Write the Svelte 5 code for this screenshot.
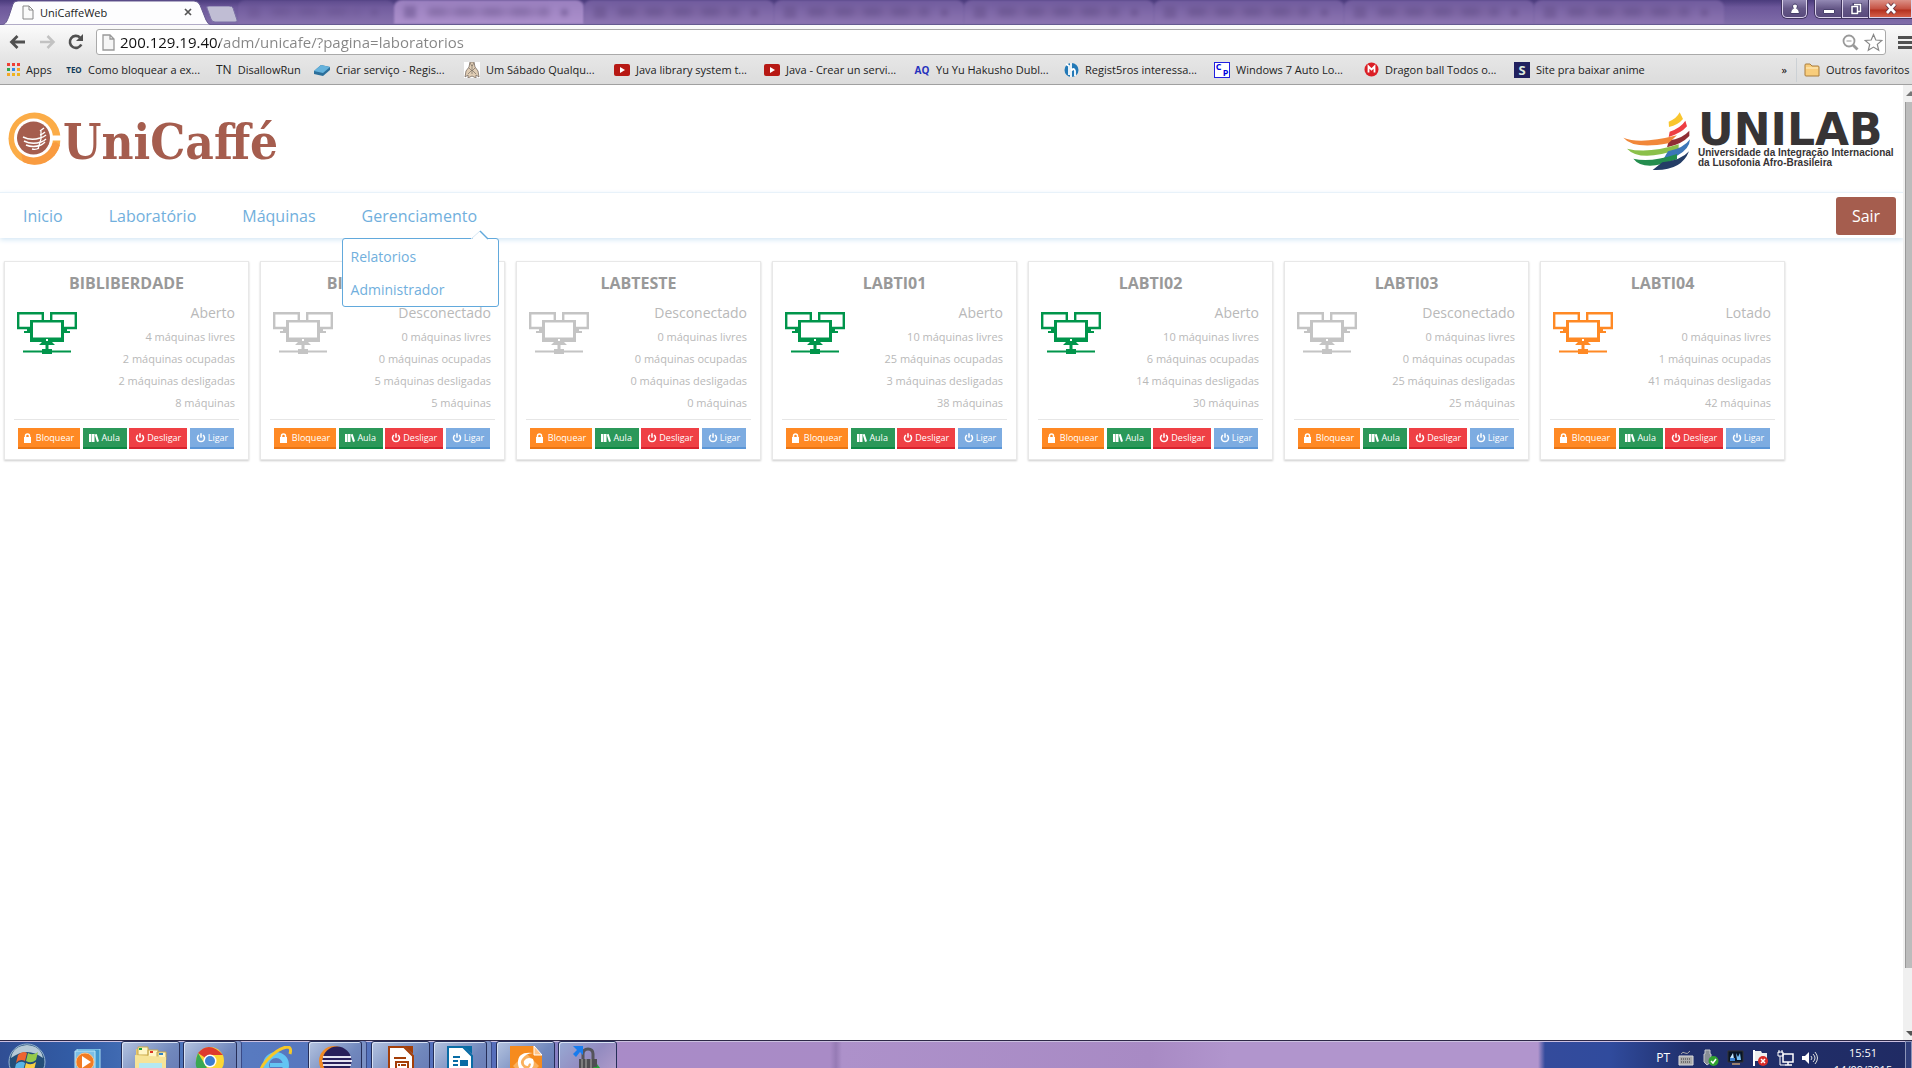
<script>
  const bookmarks = [
    { icon: 'teo', label: 'Como bloquear a ex...' },
    { icon: 'tn', label: 'DisallowRun', short: true },
    { icon: 'box', label: 'Criar serviço - Regis...' },
    { icon: 'figure', label: 'Um Sábado Qualqu...' },
    { icon: 'video', label: 'Java library system t...' },
    { icon: 'video', label: 'Java - Crear un servi...' },
    { icon: 'aq', label: 'Yu Yu Hakusho Dubl...' },
    { icon: 'globe', label: 'Regist5ros interessa...' },
    { icon: 'cp', label: 'Windows 7 Auto Lo...' },
    { icon: 'mega', label: 'Dragon ball Todos o...' },
    { icon: 'site', label: 'Site pra baixar anime' }
  ];
  const labs = [
    { name: 'BIBLIBERDADE', status: 'Aberto', tone: 'open', free: 4, busy: 2, off: 2, total: 8 },
    { name: 'BIBPALMARES', status: 'Desconectado', tone: 'offline', free: 0, busy: 0, off: 5, total: 5 },
    { name: 'LABTESTE', status: 'Desconectado', tone: 'offline', free: 0, busy: 0, off: 0, total: 0 },
    { name: 'LABTI01', status: 'Aberto', tone: 'open', free: 10, busy: 25, off: 3, total: 38 },
    { name: 'LABTI02', status: 'Aberto', tone: 'open', free: 10, busy: 6, off: 14, total: 30 },
    { name: 'LABTI03', status: 'Desconectado', tone: 'offline', free: 0, busy: 0, off: 25, total: 25 },
    { name: 'LABTI04', status: 'Lotado', tone: 'full', free: 0, busy: 1, off: 41, total: 42 }
  ];
  const backgroundTabs = ['dim', 'bright', 'mid', 'mid', 'mid', 'mid', 'mid', 'mid'];
  let address = $state('200.129.19.40/adm/unicafe/?pagina=laboratorios');
</script>

{#snippet power()}
  <svg width="10" height="10" viewBox="0 0 10 10" fill="none" stroke="#fff" stroke-width="1.5"><path d="M3 2.200a3.500 3.500 0 1 0 4 0M5 .300v4.500" /></svg>
{/snippet}

<div class="window">
  <div class="tabstrip">
    <div class="tab">
      <svg class="shape" viewBox="0 0 212 25" preserveAspectRatio="none"><path d="M0 25C6 25 7 21 9 16L13 4Q14 1 18 1H194Q198 1 200 5L206 20Q208 25 212 25Z" fill="#fdfdfe" stroke="#665a90" /></svg>
      <svg width="12" height="15" viewBox="0 0 12 15"><path d="M1 1h6l4 4v9H1zM7 1v4h4" fill="#fafafa" stroke="#888" /></svg>
      <span>UniCaffeWeb</span>
      <button class="plain" aria-label="Fechar guia"><svg width="8" height="8" viewBox="0 0 8 8"><path d="M1 1l6 6M7 1L1 7" stroke="#555" stroke-width="1.7" /></svg></button>
    </div>
    <button class="newtab" aria-label="Nova guia"><svg width="32" height="17" viewBox="0 0 32 17"><path d="M1 2Q0 0 3 0H23Q26 0 27 2L31 14Q32 16 29 16H9Q6 16 5 13Z" fill="#c0bdd4" stroke="#7b71a5" /></svg></button>
    <div class="glass">
      {#each backgroundTabs as tone}
        <div class="ghost {tone}"><i></i><b></b><u></u></div>
      {/each}
    </div>
    <div class="controls">
      <button class="user" aria-label="Usuário"><svg width="12" height="12" viewBox="0 0 12 12"><path d="M6 1a2.4 2.4 0 0 1 1.5 4.3Q10.5 6 10.5 10.5h-9Q1.500 6 4.500 5.300A2.400 2.400 0 0 1 6 1z" fill="#fff" stroke="#443d68" /></svg></button>
      <div class="group">
        <button aria-label="Minimizar"><svg width="14" height="12" viewBox="0 0 14 12"><path d="M1.500 6.500h11v4h-11z" fill="#fff" stroke="#4a426e" /></svg></button>
        <button aria-label="Restaurar"><svg width="14" height="14" viewBox="0 0 14 14" fill="none"><path d="M5 2.500h6.500v7H5zM3 4.500h5.500v7H3z" stroke="#4a426e" stroke-width="3" /><path d="M5 2.500h6.500v7H9M3 4.500h5.500v7H3z" stroke="#fff" stroke-width="1.500" /></svg></button>
        <button class="close" aria-label="Fechar"><svg width="14" height="13" viewBox="0 0 14 13"><path d="M3 2l8 9M11 2l-8 9" stroke="#653442" stroke-width="4.500" /><path d="M3 2l8 9M11 2l-8 9" stroke="#fff" stroke-width="2.700" /></svg></button>
      </div>
    </div>
  </div>

  <div class="toolbar">
    <button class="plain" aria-label="Voltar"><svg width="18" height="16" viewBox="0 0 18 16" fill="none" stroke="#505050" stroke-width="2.800"><path d="M2 8h14M8.500 2l-6 6 6 6" /></svg></button>
    <button class="plain" aria-label="Avançar"><svg width="18" height="16" viewBox="0 0 18 16" fill="none" stroke="#c2c2c2" stroke-width="2.500"><path d="M2 8h14M9.500 2l6 6-6 6" /></svg></button>
    <button class="plain" aria-label="Recarregar"><svg width="18" height="18" viewBox="0 0 18 18"><path d="M14.300 11.500A6 6 0 1 1 13 4.500" fill="none" stroke="#505050" stroke-width="2.600" /><path d="M16 1v7H9z" fill="#505050" /></svg></button>
    <div class="addressbox">
      <svg width="13" height="17" viewBox="0 0 13 17"><path d="M1 1h7l4 4v11H1zM8 1v4h4" fill="#f6f6f6" stroke="#999" stroke-width="1.300" /></svg>
      <input aria-label="Endereço" bind:value={address} spellcheck="false" />
      <button class="plain" aria-label="Zoom"><svg width="17" height="17" viewBox="0 0 17 17" fill="none" stroke="#999"><circle cx="7" cy="7" r="5.500" stroke-width="1.800" /><path d="M11 11l4.500 4.500" stroke-width="2.800" /><path d="M4.500 7h5" /></svg></button>
      <button class="plain" aria-label="Favoritar"><svg width="19" height="19" viewBox="0 0 19 19"><path d="M9.500 1.500l2.300 5.500 6 .500-4.500 3.900 1.400 5.900-5.200-3.200-5.200 3.200 1.400-5.900L1.200 7.500l6-.500z" fill="#fff" stroke="#888" stroke-width="1.200" /></svg></button>
    </div>
    <button class="plain" aria-label="Menu"><svg width="15" height="15" viewBox="0 0 15 15"><path d="M1 2.500h14M1 7.500h14M1 12.500h14" stroke="#505050" stroke-width="3" /></svg></button>
  </div>

  <nav class="bookmarks" aria-label="Favoritos">
    <a class="apps" href="#apps">
      <svg width="13" height="13" viewBox="0 0 13 13"><path d="M0 0h3v3H0zM5 0h3v3H5zM10 0h3v3h-3z" fill="#ee4035" /><path d="M0 5h3v3H0z" fill="#2fa84f" /><path d="M5 5h3v3H5z" fill="#2f88e8" /><path d="M10 5h3v3h-3zM0 10h3v3H0z" fill="#f5a623" /><path d="M5 10h3v3H5zM10 10h3v3h-3z" fill="#efb321" /></svg>
      Apps
    </a>
    {#each bookmarks as mark}
      <a class="mark" class:short={mark.short} href="#favorito">
        {#if mark.icon === 'tn'}<span class="tn">TN</span>
        {:else if mark.icon === 'teo'}<span class="badge teo">TEO</span>
        {:else if mark.icon === 'aq'}<span class="badge aq">AQ</span>
        {:else if mark.icon === 'site'}<span class="badge site">S</span>
        {:else if mark.icon === 'cp'}<span class="badge cp"><span>C</span><span>P</span></span>
        {:else if mark.icon === 'box'}
          <svg width="16" height="16" viewBox="0 0 16 16"><path d="M0 9l7-6 9 2v3l-7 6-9-2z" fill="#2b6f9b" /><path d="M0 9l7-6 9 2-7 6z" fill="#65b2dc" /></svg>
        {:else if mark.icon === 'figure'}
          <svg width="16" height="16" viewBox="0 0 16 16"><path d="M0 0h16v16H0z" fill="#fff" /><path d="M6 0L5 5 2 9 1 15l3-2v3l4-2 4 2v-3l3 2-1-6-3-4-1-5z" fill="#e0cdb4" stroke="#776b62" stroke-width=".8" /><path d="M6 1l2 3 2-3M5 6l3 3 3-3M4 12l4-4 4 4M8 3v9" fill="none" stroke="#84786d" stroke-width=".8" /></svg>
        {:else if mark.icon === 'video'}
          <svg width="16" height="12" viewBox="0 0 16 12"><rect width="16" height="12" rx="2" fill="#b71914" /><path d="M6 3l5 3-5 3z" fill="#fff" /></svg>
        {:else if mark.icon === 'globe'}
          <svg width="15" height="16" viewBox="0 0 15 16"><circle cx="7.500" cy="8" r="7" fill="#2379b7" /><path d="M2 2l3 2v9M7 1v14M7 9q3-4 4 0v5" fill="none" stroke="#fff" stroke-width="1.800" /></svg>
        {:else}
          <svg width="15" height="15" viewBox="0 0 15 15"><circle cx="7.500" cy="7.500" r="7" fill="#db1f26" /><path d="M4.500 10.500v-6l3 3 3-3v6" fill="none" stroke="#fff" stroke-width="1.800" /></svg>
        {/if}
        <span>{mark.label}</span>
      </a>
    {/each}
    <button class="plain more" aria-label="Mais favoritos">»</button>
    <a class="others" href="#outros">
      <svg width="16" height="14" viewBox="0 0 16 14"><path d="M1 12V2q0-1 1-1h4l2 2h6q1 0 1 1v9H2q-1 0-1-1z" fill="#f8cd7c" stroke="#a97c3c" /><path d="M2 5h12" stroke="#fff0c8" /></svg>
      Outros favoritos
    </a>
  </nav>

  <div class="viewport">
    <div class="page">
      <header>
        <a class="brand" href="#inicio">
          <svg width="53" height="53" viewBox="0 0 53 53">
            <circle cx="26.500" cy="26.500" r="26" fill="#fbac47" />
            <path d="M48 30L52 33A26 26 0 0 1 15 50L13 41z" fill="#f99b40" />
            <circle cx="25.500" cy="26" r="19.500" fill="#fff" />
            <path d="M42 23.500h11v5H42z" fill="#fff" />
            <circle cx="25.500" cy="26" r="16.500" fill="#a55d4e" />
            <g fill="none" stroke="#fff" stroke-width="1.400"><path d="M15 25q8 4 17 1M16 29q8 4 17 1M18 33q7 3 15 0M24 37q4 1 7-1" /><path d="M32 19l4-3M32 23q3-1 5-3M32 26q4-1 6-3M33 30q3-1 5-3M33 33q2-1 4-3" /><path d="M33 19v8l-3 10" stroke-width="1.200" /></g>
          </svg>
          <span>UniCaffé</span>
        </a>
        <a class="unilab" href="#unilab">
          <svg width="68" height="59" viewBox="70 65 204 177">
            <path d="M207 94Q231 85 240 66L250 86Q235 104 208 110z" fill="#f9c62f" />
            <path d="M210 124Q244 112 257 91L262 108Q244 129 207 140z" fill="#ee3e43" />
            <path d="M208 150Q247 146 269 121V137Q246 162 202 171z" fill="#902e35" />
            <path d="M71 142Q120 163 232 135L206 159Q102 178 71 142z" fill="#f18739" />
            <path d="M82 175Q145 191 237 162V177Q121 217 82 175z" fill="#8bc04a" />
            <path d="M205 183Q252 174 271 147Q270 177 231 197L191 207z" fill="#3c76b8" />
            <path d="M101 205Q151 218 232 191V207Q132 246 101 205z" fill="#248d4e" />
            <path d="M188 216Q245 210 268 183Q245 243 159 239z" fill="#243d66" />
          </svg>
          <span class="words"><strong>UNILAB</strong><small>Universidade da Integração Internacional<br />da Lusofonia Afro-Brasileira</small></span>
        </a>
      </header>

      <nav class="main" aria-label="Principal">
        <a href="#inicio">Inicio</a>
        <a href="#laboratorio">Laboratório</a>
        <a href="#maquinas">Máquinas</a>
        <div class="has-menu">
          <a href="#gerenciamento">Gerenciamento</a>
          <div class="dropdown">
            <svg class="pointer" width="18" height="10" viewBox="0 0 18 10"><path d="M0 10l9-9 9 9z" fill="#fff" /><path d="M0 9l9-8" stroke="#d5e6f3" /><path d="M9 1l8 8" stroke="#62a9dc" stroke-width="1.500" /></svg>
            <a href="#relatorios">Relatorios</a>
            <a href="#administrador">Administrador</a>
          </div>
        </div>
        <button class="exit">Sair</button>
      </nav>

      <main>
        {#each labs as lab}
          <article>
            <h2>{lab.name}</h2>
            <div class="body">
              <svg class={lab.tone} width="60" height="42" viewBox="0 0 60 42" fill="currentColor">
                <path fill="none" stroke="currentColor" stroke-width="2.400" d="M13 16H1.200V1.200h24.600V8M47 16h11.800V1.200H34.200V8" />
                <path d="M10 17h4v4H7v-2h3zM46 17h4v2h3v2h-7zM13 8h34v22H13zM25 30h10l3 3H22zM28.500 33h3v4h-3zM25 37h10v5H25z" />
                <path d="M6 38.400h48v2.200H6z" />
                <path d="M16 10.500h28v15H16zM29 27h2v2h-2z" fill="#fff" />
              </svg>
              <div class="stats">
                <p class="status">{lab.status}</p>
                <p>{lab.free} máquinas livres</p>
                <p>{lab.busy} máquinas ocupadas</p>
                <p>{lab.off} máquinas desligadas</p>
                <p>{lab.total} máquinas</p>
              </div>
            </div>
            <div class="actions">
              <button class="lock"><svg width="7" height="10" viewBox="0 0 7 10"><path d="M0 4h7v6H0z" fill="#fff" /><path d="M1.500 5V3q0-2 2-2t2 2v2" fill="none" stroke="#fff" stroke-width="1.500" /></svg>Bloquear</button>
              <button class="class"><svg width="10" height="8" viewBox="0 0 10 8"><path d="M0 0h2.500v8H0zM3 0h2.500v8H3zM5.700 .500l2-.500L10 7.300l-2 .700z" fill="#fff" /></svg>Aula</button>
              <button class="off">{@render power()}Desligar</button>
              <button class="on">{@render power()}Ligar</button>
            </div>
          </article>
        {/each}
      </main>
    </div>
    <div class="scrollbar"><span class="up"></span><div class="thumb"></div><span class="down"></span></div>
  </div>

  <footer class="taskbar">
    <div class="launch">
      <button class="start" aria-label="Iniciar"><svg width="38" height="38" viewBox="0 0 38 38">
        <circle cx="19" cy="19" r="18" fill="#234e78" stroke="#98b7d2" /><path d="M3 15Q19 3 35 15Q33 3 19 2Q5 3 3 15" fill="#b5c9d6" />
        <path d="M10 12q5-5 9-2l-2 8q-5-3-9 2z" fill="#ee6531" /><path d="M20 10q5 3 10-1l-2 8q-5 4-10 1z" fill="#95c94a" /><path d="M8 21q5-4 9-1l-2 8q-5-3-9 1z" fill="#58b4e5" /><path d="M18 20q5 3 10-1l-2 8q-5 4-10 1z" fill="#f9cf45" />
      </svg></button>
      <button class="media" aria-label="Media Player"><svg width="27" height="32" viewBox="0 0 27 32"><path d="M3 0h23v32H3z" fill="#4298cf" stroke="#a8def2" /><path d="M1 2h20v30H1z" fill="#7cbfe6" stroke="#bee9f6" /><circle cx="11" cy="13" r="9" fill="#f17c23" stroke="#ffc284" /><path d="M8 7l9 6-9 6z" fill="#fff" /></svg></button>
    </div>
    <button class="task" aria-label="Windows Explorer"><svg width="34" height="34" viewBox="0 0 34 34"><path d="M2 3h8l2 3h15l5 5v23H2z" fill="#e7c66c" /><path d="M4 1h10v8H4zM14 4h10v9H14zM23 6h9v8h-9z" fill="#fff5c5" stroke="#c7a94d" /><path d="M5 2h3v2H5z" fill="#18a13d" /><path d="M16 5h3v2h-3z" fill="#df3427" /><path d="M25 7h4v2h-4z" fill="#2c82c5" /><path d="M1 9l31 2v23H1z" fill="#f6e398" /><path d="M5 17h23v12H5z" fill="#b4e8f2" /></svg></button>
    <button class="task stacked" aria-label="Google Chrome"><svg width="30" height="30" viewBox="0 0 30 30"><circle cx="15" cy="15" r="14" fill="#fbd735" /><path d="M15 15L3 7Q14-6 28 9H15z" fill="#dd3b2e" /><path d="M3 7l8 13 4 9Q-5 27 3 7" fill="#39a852" /><circle cx="15" cy="15" r="6.500" fill="#fff" /><circle cx="15" cy="15" r="5" fill="#3b7ed1" /></svg></button>
    <button class="task flat" aria-label="Internet Explorer"><svg width="34" height="34" viewBox="0 0 34 34"><circle cx="17" cy="19" r="10" fill="none" stroke="#63c4f3" stroke-width="6" /><path d="M11 19h18" stroke="#63c4f3" stroke-width="4" /><path d="M3 29Q-1 24 8 14 19 2 28 1q5 0 3 7" fill="none" stroke="#f6c829" stroke-width="3" /></svg></button>
    <button class="task stacked" aria-label="Eclipse"><svg width="34" height="32" viewBox="0 0 34 32"><circle cx="16" cy="15" r="15" fill="#f28a24" /><circle cx="19" cy="15" r="14.500" fill="#29205b" /><path d="M5 11h28M4 15h30M5 19h28" stroke="#e5e3f2" stroke-width="2" /></svg></button>
    <button class="task" aria-label="LibreOffice Impress"><svg width="26" height="34" viewBox="0 0 26 34"><path d="M1 1h15l9 9v24H1z" fill="#fff" stroke="#a43e08" stroke-width="2" /><path d="M16 0h9v8z" fill="#a43e08" /><path d="M6 12h12M8 16h12v10H8zM10 19h2M13 19h5M10 23h2M13 23h5" fill="none" stroke="#a43e08" stroke-width="2" /></svg></button>
    <button class="task stacked" aria-label="LibreOffice Writer"><svg width="26" height="34" viewBox="0 0 26 34"><path d="M1 1h15l9 9v24H1z" fill="#fff" stroke="#086ca5" stroke-width="2" /><path d="M16 0h9v8z" fill="#086ca5" /><path d="M6 11h7M6 15h5M6 19h5M6 23h14" stroke="#086ca5" stroke-width="2" /><path d="M13 14h8v6h-8z" fill="#086ca5" /></svg></button>
    <button class="task" aria-label="Foxit Reader"><svg width="32" height="34" viewBox="0 0 32 34"><path d="M0 0h24l8 9v25H0z" fill="#f68b1e" /><path d="M24 0v9h8z" fill="#ffc488" stroke="#fff" /><path d="M3 20L16 7l13 13-13 13z" fill="#fab15e" /><path d="M23 7Q7 5 8 18q1 9 10 7 8-4 5-12-6-3-9 2-1 5 4 5 1-4 3-2-1 6-7 4-5-4-2-9 4-6 11-6z" fill="#fff" /></svg></button>
    <button class="task pale" aria-label="Bloqueio remoto"><svg width="30" height="34" viewBox="0 0 30 34"><path d="M10 15V8q0-5 5-5t5 5v7" fill="none" stroke="#54545b" stroke-width="3" /><path d="M6 13h18v18H6z" fill="#4e4e52" /><path d="M9 13v18M13 13v18M18 13v18" stroke="#7d7d7d" stroke-width="2" /><path d="M0 0h10v9L7 6l-4 5-3-3 4-4z" fill="#187ced" /><path d="M20 21h4v-3l6 8v8z" fill="#25a438" /></svg></button>
    <div class="tray">
      <span>PT</span>
      <svg width="16" height="16" viewBox="0 0 16 16"><path d="M3 4q2-3 4-1t5-2" stroke="#aaa" fill="none" /><path d="M1 6h14v9H1z" fill="#aaa" stroke="#ddd" /><path d="M3 9h10M3 12h10" stroke="#333" stroke-dasharray="1 1" /></svg>
      <svg width="17" height="17" viewBox="0 0 17 17"><path d="M3 1h5v4h1v8l-4 3-3-3V5h1z" fill="#888e96" stroke="#c4c7cc" /><circle cx="11.500" cy="12" r="5" fill="#31a330" /><path d="M9 12l2 2 3-4" stroke="#fff" fill="none" stroke-width="1.500" /></svg>
      <svg width="17" height="17" viewBox="0 0 17 17"><path d="M1 2h15v11H1z" fill="#071425" stroke="#333" /><path d="M3 9l3-5 1 6z" fill="#c5e9ff" /><path d="M9 4l2 4 2-4 1 7h-4z" fill="#77bff2" /><path d="M3 9h5v3H3z" fill="#3c82d0" /><path d="M5 14h8v2H5z" fill="#9b806e" /></svg>
      <svg width="17" height="17" viewBox="0 0 17 17"><path d="M2 1v16" stroke="#fff" stroke-width="2" /><path d="M3 2h6l1 2h5v8H3z" fill="#eee" /><circle cx="11" cy="12" r="5" fill="#d92b28" /><path d="M9 10l4 4M13 10l-4 4" stroke="#fff" stroke-width="1.500" /></svg>
      <svg width="17" height="17" viewBox="0 0 17 17"><path d="M6 5h10v8H6zM8 16h7M11 13v3" fill="none" stroke="#fff" stroke-width="1.500" /><path d="M1 3h5v4H1zM2 1v3M5 1v3M3 7v9h5" fill="none" stroke="#fff" /></svg>
      <svg width="17" height="17" viewBox="0 0 17 17"><path d="M0 7h3l4-4v12l-4-4H0z" fill="#fff" /><path d="M9 7q2 2 0 4M11 5q4 4 0 8M13 3q5 6 0 12" fill="none" stroke="#ddd" /></svg>
    </div>
    <div class="clock"><time>15:51</time><time>14/09/2015</time></div>
    <button class="desktop" aria-label="Mostrar área de trabalho"></button>
  </footer>
</div>

<style>
  :global(body) { margin: 0; background: #fff; }
  .window { height: 100vh; overflow: hidden; display: flex; flex-direction: column; font-family: "Open Sans", "Noto Sans", sans-serif; font-size: 12px; }
  .window :is(button, input) { font: inherit; }
  a { color: inherit; text-decoration: none; }
  button { cursor: pointer; }
  svg { display: block; flex: none; }
  .plain { border: 0; padding: 0; background: none; }

  .tabstrip { flex: 0 0 25px; box-sizing: border-box; display: flex; background: linear-gradient(#4a3b7c, #6c579a 30%, #806da9); border-bottom: 1px solid #665a90; }
  .tab { position: relative; width: 206px; box-sizing: border-box; padding: 0 14px 0 22px; display: flex; align-items: center; gap: 6px; flex: none; font-size: 11px; color: #222; }
  .tab > * { position: relative; }
  .tab span { flex: 1; }
  .tab .shape { position: absolute; inset: 0 auto auto 0; width: 212px; height: 25px; }
  .newtab { align-self: flex-start; border: 0; background: none; padding: 6px 0 0; flex: none; }
  .glass { flex: 1; display: flex; overflow: hidden; }
  .ghost { position: relative; flex: 0 0 190px; box-sizing: border-box; padding: 0 16px 0 10px; display: flex; align-items: center; gap: 12px; background: linear-gradient(#705b9d, #8d75b2); filter: blur(1px); border-radius: 8px 8px 0 0; }
  .ghost.dim { flex-basis: 156px; opacity: .5; }
  .ghost.bright { background: linear-gradient(#9a80bf, #ac90cc); }
  .ghost i { width: 12px; height: 12px; background: #65508a; opacity: .5; filter: blur(2px); }
  .ghost b { flex: 1; height: 8px; background: repeating-linear-gradient(90deg, #4b396c 0 15px, #765d96 19px 28px); opacity: .35; filter: blur(3px); }
  .ghost u { width: 7px; height: 7px; background: #604b83; opacity: .5; filter: blur(2px); }
  .controls { display: flex; gap: 8px; align-items: flex-start; }
  .controls button { height: 18px; width: 27px; padding: 0; display: grid; place-items: center; background: linear-gradient(#9389b4, #665888 50%, #584a7c); border: 1px solid #dcd3eb; border-top: 0; box-shadow: 0 0 0 1px #40345f; }
  .controls .user { width: 25px; border-radius: 0 0 5px 5px; }
  .group { display: flex; }
  .controls .group button:first-child { border-radius: 0 0 0 5px; }
  .controls .close { width: 43px; background: linear-gradient(#dc9187, #c65445 50%, #b43220 60%, #d45f49); }

  .toolbar { flex: 0 0 32px; box-sizing: border-box; display: flex; align-items: center; gap: 11px; padding: 2px 0 0 9px; background: linear-gradient(#fbfbfb, #e6e6e6); }
  .addressbox { flex: 1; height: 24px; display: flex; align-items: center; gap: 5px; padding: 0 2px 0 5px; border: 1px solid #aaa; border-radius: 3px; background: #fff; }
  .addressbox input { flex: 1; min-width: 0; padding: 0; border: 0; outline: 0; font-size: 15px; color: transparent; background: linear-gradient(90deg, #111 100px, #858585 100px); background-clip: text; -webkit-background-clip: text; }

  .bookmarks { flex: 0 0 28px; box-sizing: border-box; display: flex; align-items: center; padding: 0 0 2px 7px; background: linear-gradient(#e6e6e6, #dcdcdc); border-bottom: 1px solid #a0a0a0; color: #222; font-size: 11px; white-space: nowrap; }
  .bookmarks a { display: flex; align-items: center; gap: 6px; }
  .bookmarks .apps { width: 59px; }
  .mark { width: 150px; }
  .mark.short { width: 98px; }
  .tn { font-size: 12px; }
  .badge { width: 16px; height: 16px; line-height: 16px; text-align: center; font-weight: 700; font-size: 10px; }
  .teo { font-size: 8px; color: #123b58; }
  .aq { color: #2631bd; }
  .site { background: #20205f; color: #dce9df; font-size: 13px; }
  .cp { box-sizing: border-box; border: 1px solid #2020e0; background: #fff; color: #00d; display: grid; grid-template-columns: 1fr 1fr; line-height: 8px; font-size: 9px; }
  .cp span:last-child { align-self: end; }
  .more { margin-left: auto; padding-right: 9px; }
  .others { width: 116px; padding-left: 7px; box-sizing: border-box; border-left: 1px solid #ccd1d5; height: 24px; }

  .viewport { flex: 1; min-height: 0; display: flex; }
  .page { flex: 1; min-width: 0; overflow: hidden; }
  header { height: 107px; box-sizing: border-box; padding: 27px 9px 0 8px; display: flex; justify-content: space-between; align-items: flex-start; }
  .brand { display: flex; gap: 2px; height: 53px; color: #a55d4e; font: 700 49px/60px "DejaVu Serif Condensed", "DejaVu Serif", serif; }
  .unilab { display: flex; gap: 7px; color: #373435; }
  .words { display: flex; flex-direction: column; width: 196px; white-space: nowrap; }
  .words strong { font: 700 44px/36px "DejaVu Sans", sans-serif; }
  .words small { font: 700 10px/10px "Liberation Sans", sans-serif; }

  .main { height: 46px; box-sizing: border-box; display: flex; align-items: center; border-top: 1px solid #e8f2fa; box-shadow: 0 2px 5px #d6e8f6; font-size: 16px; color: #71afdd; position: relative; z-index: 1; }
  .main > a, .has-menu > a { padding: 0 23px; line-height: 46px; }
  .has-menu { position: relative; }
  .dropdown { position: absolute; left: 3px; top: 45px; width: 157px; box-sizing: border-box; padding: 1px 8px 0; background: #fff; border: 1px solid #62a9dc; border-radius: 3px; font-size: 14px; }
  .dropdown a { display: block; line-height: 33px; }
  .pointer { position: absolute; right: 9px; top: -9px; }
  .exit { margin: 0 7px 0 auto; width: 60px; height: 38px; padding: 0; border: 0; border-radius: 3px; color: #fff; background: #a55d4e; }

  main { display: flex; flex-wrap: wrap; gap: 11px; padding: 23px 4px; }
  article { width: 245px; box-sizing: border-box; height: 199px; border: 1px solid #e8e8e8; box-shadow: 0 1px 2px #ccc; padding: 10px 9px 0; }
  h2 { margin: 0; font-size: 16px; line-height: 22px; text-align: center; color: #999; }
  .body { display: flex; justify-content: space-between; padding: 7px 4px 5px 3px; border-bottom: 1px solid #e6e6e6; }
  .body svg { margin-top: 11px; }
  .open { color: #00954b; }
  .offline { color: #c4c4c4; }
  .full { color: #ff8924; }
  .stats { text-align: right; color: #b9b9b9; font-size: 11px; line-height: 22px; }
  .stats p { margin: 0; }
  .stats .status { font-size: 14px; line-height: 24px; margin-bottom: 1px; }
  .actions { display: grid; grid-template-columns: 62px 44px 58px 44px; justify-content: space-between; padding: 8px 5px 0 4px; }
  .actions button { height: 21px; padding: 0; border: 0; border-bottom: 2px solid; display: flex; align-items: center; justify-content: center; gap: 2px; color: #fff; font-size: 9px; font-weight: 500; }
  .actions .lock { background: #ff8924; border-color: #e97514; gap: 5px; }
  .actions .class { background: #2b9859; border-color: #0c8742; }
  .actions .off { background: #ef4045; border-color: #d9232e; }
  .actions .on { background: #7dace1; border-color: #5b96d7; }
  .scrollbar { flex: 0 0 9px; display: flex; flex-direction: column; align-items: flex-end; background: #f0f0f0; overflow: hidden; }
  .thumb { width: 7px; box-sizing: border-box; flex: 0 1 866px; background: #bcbcbc; border-left: 1px solid #999; }
  .up, .down { width: 0; height: 0; border: 5px solid transparent; margin-right: -4px; }
  .up { border-top-width: 0; border-bottom-color: #777; margin-top: 6px; margin-bottom: 6px; }
  .down { border-bottom-width: 0; border-top-color: #555; margin-top: auto; margin-bottom: 4px; }

  .taskbar { flex: 0 0 28px; box-sizing: border-box; overflow: hidden; display: flex; align-items: flex-start; border-top: 1px solid #2d2847; box-shadow: inset 0 1px #cbbfe0; background: linear-gradient(90deg, #304e94 0, #325ca5 70px, #4670b7 140px, #587ac0 250px, #536dbb 490px, #a98bc8 600px, #a98bc6 830px, #967bb5 836px, #ad91ca 842px, #a88ac4 1150px, #b195cd 1230px, #b195cd 1538px, #344b9c 1545px, #304b9d 1610px, #202f6b 1690px, #202b64); }
  .launch { width: 121px; display: flex; gap: 28px; padding-left: 8px; box-sizing: border-box; }
  .taskbar button { flex: none; border: 0; padding: 0; background: none; }
  .taskbar .start { padding-top: 2px; }
  .taskbar .media { padding-top: 7px; }
  .taskbar .task { width: 59px; height: 40px; margin-right: 3px; padding-top: 4px; display: flex; justify-content: center; border: 1px solid #252e58; border-radius: 3px; box-shadow: inset 1px 1px #d8e2f4; background: linear-gradient(135deg, #b4c3df, #7188bd 60%, #6679b4); }
  .taskbar .flat { background: none; border-color: transparent; box-shadow: none; }
  .taskbar .stacked { width: 54px; margin-right: 9px; box-shadow: inset 1px 1px #d8e2f4, 4px 0 #7b91c4, 5px 0 #3a4a86; }
  .taskbar .pale { background: linear-gradient(135deg, #97aad4, #938bc0 50%, #b7a0cd); }
  .tray { margin: 0 2px 0 auto; display: flex; gap: 8px; align-items: center; padding-top: 8px; color: #fff; }
  .clock { width: 84px; padding-top: 3px; display: flex; flex-direction: column; align-items: center; color: #fff; line-height: 17px; font-size: 11px; }
  .taskbar .desktop { width: 7px; height: 40px; border: 1px solid #8c94b9; background: #303e7a; }
</style>
